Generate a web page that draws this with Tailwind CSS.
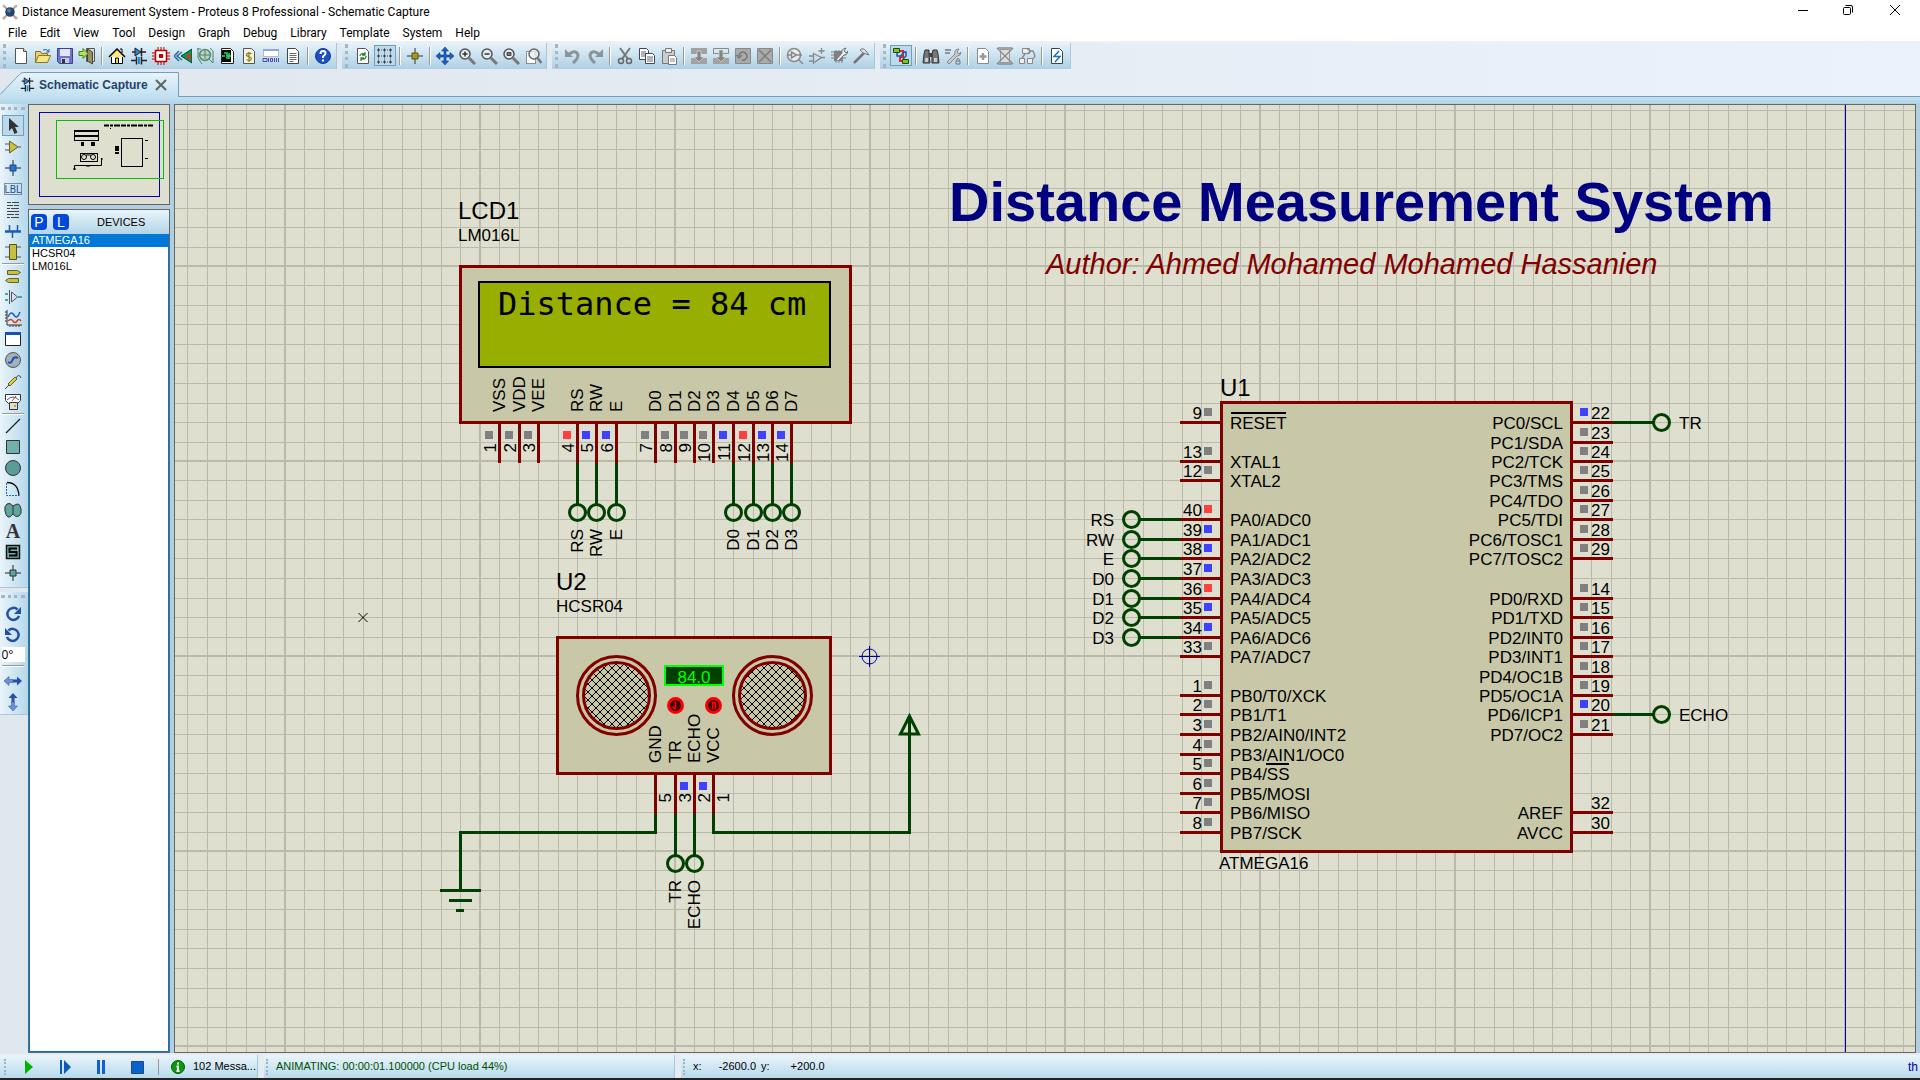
<!DOCTYPE html>
<html lang="en">
<head>
<meta charset="utf-8">
<title>Distance Measurement System - Proteus 8 Professional - Schematic Capture</title>
<script src="https://cdn.jsdelivr.net/npm/@tailwindcss/browser@4"></script>
</head>
<body class="flex h-screen flex-col overflow-hidden bg-[#e4ebf2] font-['Open_Sans',sans-serif] text-xs text-black">

<header class="shrink-0 bg-white">
  <div class="flex h-[25px] items-start justify-between">
    <div class="flex h-6 items-center gap-1 pl-0.5">
      <svg class="size-4" viewBox="0 0 16 16"><path d="M2 2l12 12M14 2L2 14" stroke="#b9a58c" stroke-width="2"/><circle cx="2" cy="2" r="1.600" fill="#bbb"/><circle cx="14" cy="2" r="1.600" fill="#bbb"/><circle cx="2" cy="14" r="1.600" fill="#caa98a"/><circle cx="14" cy="14" r="1.600" fill="#caa98a"/><circle cx="8" cy="8" r="4.800" fill="#2c4468"/><circle cx="7" cy="6.500" r="2" fill="#4d7bb5"/></svg>
      <h1 class="whitespace-nowrap font-['Roboto',sans-serif] text-xs">Distance Measurement System - Proteus 8 Professional - Schematic Capture</h1>
    </div>
    <div class="flex h-5">
      <button aria-label="Minimize" class="flex w-[45px] items-center justify-center"><svg class="size-3" viewBox="0 0 12 12"><path d="M1 6.500h10" stroke="#000"/></svg></button>
      <button aria-label="Restore" class="flex w-[45px] items-center justify-center"><svg class="size-3" viewBox="0 0 12 12" fill="none" stroke="#000"><rect x="1.500" y="3.500" width="7" height="7" rx="1"/><path d="M3.500 1.500h5.500a1.500 1.500 0 0 1 1.500 1.500v5.500"/></svg></button>
      <button aria-label="Close" class="flex w-[50px] items-center justify-center"><svg class="size-3" viewBox="0 0 12 12"><path d="M1 1l10 10M11 1L1 11" stroke="#000"/></svg></button>
    </div>
  </div>
  <nav id="menu" class="flex h-4 items-center gap-[13px] pl-2 font-['Roboto',sans-serif] text-xs"></nav>
</header>

<div id="toolbars" class="flex h-7 shrink-0 items-end gap-[5px] border-t-2 border-[#f0f0f0] bg-linear-to-r from-[#e0e7ee] to-[#eaf2fb]"></div>

<div class="flex h-7 shrink-0 items-end border-b border-[#6f9fbd] bg-linear-to-r from-[#e0e7ee] to-[#eaf2fb]">
  <div class="relative -mb-px flex h-[25px] w-[179px] items-center pl-5">
    <svg class="absolute inset-0 size-full" viewBox="0 0 179 25"><defs><linearGradient id="tabg" x1="0" y1="0" x2="0" y2="1"><stop offset="0" stop-color="#e8f4fb"/><stop offset="1" stop-color="#c2e0f0"/></linearGradient></defs><path d="M0 22.500L19.500 2.500Q21 .5 24 .5H178.500V25H0z" fill="url(#tabg)"/><path d="M0 22.500L19.500 2.500Q21 .5 24 .5H178.500V25" fill="none" stroke="#6f9fbd"/></svg>
    <button class="relative flex items-center gap-1 whitespace-nowrap font-['Liberation_Sans',sans-serif] text-xs font-bold text-[#1f4568]"><svg class="size-[15px]" viewBox="0 0 18 18"><use href="#i-schem"/></svg>Schematic Capture</button>
    <button aria-label="Close tab" class="relative ml-[7px]"><svg class="size-[12px]" viewBox="0 0 12 12"><path d="M1 1l10 10M11 1L1 11" stroke="#5f6468" stroke-width="2"/></svg></button>
  </div>
</div>
<div class="h-[7px] shrink-0 bg-linear-to-b from-[#c3e0f0] to-[#b0d4e8]"></div>

<main class="flex min-h-0 flex-1 bg-[#b0cfe0]">
  <div class="flex w-7 shrink-0 flex-col bg-[#e0e8ef]">
    <div id="modes" class="flex flex-col items-center border-b border-[#a9c6da] bg-linear-to-r from-[#e9f4fa] to-[#b5d8ec] pr-0.5 pb-1"></div>
    <div id="rotate" class="mt-1 flex flex-col items-center border-b border-[#a9c6da] bg-linear-to-r from-[#e9f4fa] to-[#b5d8ec] pr-0.5 pb-0.5"></div>
  </div>

  <aside class="mr-1 flex w-[142px] shrink-0 flex-col gap-1">
    <div class="h-[101px] shrink-0 border border-[#666] bg-[#dfdfcf]">
      <svg class="size-full" viewBox="29 105 140 99" fill="none" stroke="#000">
        <rect x="39.500" y="112.500" width="120" height="84" stroke="#0000c0"/>
        <rect x="56.500" y="120.500" width="107" height="58" stroke="#00c000"/>
        <path d="M104 125.500h49" stroke-width="2" stroke-dasharray="5 1 3 1 6 1"/><path d="M110 128.500h1"/>
        <rect x="74.500" y="130.500" width="24" height="10"/><path d="M74 131h25M74 136h25" stroke-width="2"/>
        <path d="M81 144h3M91 144h4M117 146v5M117 152v2" stroke-width="4"/>
        <rect x="80.500" y="153.500" width="17" height="8"/><circle cx="84" cy="157" r="2.500"/><circle cx="93" cy="157" r="2.500"/><path d="M86 155h5"/>
        <path d="M74.500 170v-4.500h27V158M86 166h4M73 169h3M101 159h2"/>
        <rect x="121.500" y="138.500" width="21" height="28"/><path d="M145 140.500h3M145 158.500h3"/>
      </svg>
    </div>
    <section class="flex min-h-0 flex-1 flex-col border border-[#666] font-['Liberation_Sans',sans-serif] text-[11px]">
      <div class="flex h-6 shrink-0 items-center gap-1.5 bg-linear-to-b from-[#eaf5fb] to-[#b2d4e7] pl-0.5">
        <button class="size-4 rounded-sm bg-[#0048d8] text-sm leading-4 text-white">P</button>
        <button class="size-4 rounded-sm bg-[#0048d8] text-sm leading-4 text-white">L</button>
        <h2 class="ml-[22px]">DEVICES</h2>
      </div>
      <ul class="flex-1 border border-t-0 border-[#0078d7] bg-white leading-[13px]">
        <li class="flex bg-[#0078d7] text-white"><button class="flex-1 pl-0.5 text-left">ATMEGA16</button></li>
        <li class="flex"><button class="flex-1 pl-0.5 text-left">HCSR04</button></li>
        <li class="flex"><button class="flex-1 pl-0.5 text-left">LM016L</button></li>
      </ul>
    </section>
  </aside>

  <div class="mr-1 min-w-0 flex-1 overflow-hidden border border-[#666] bg-[#dfdfcf]">
    <svg id="sheet" class="block size-full font-['Liberation_Sans',sans-serif]" role="img" aria-label="Schematic">
      <defs>
        <pattern id="grid" x="1454" y="460" width="195" height="195" patternUnits="userSpaceOnUse"><path id="gridlines" fill="#babaab"/></pattern>
        <pattern id="hatch" width="8" height="8" patternUnits="userSpaceOnUse"><path d="M-1 -1l10 10M9 -1L-1 9" stroke="#000"/></pattern>
      </defs>
      <g id="world" transform="translate(-175 -105)"></g>
    </svg>
  </div>
</main>

<footer class="mt-[2px] flex h-[23px] shrink-0 gap-1.5 font-['Liberation_Sans',sans-serif] text-[11px]">
  <div class="flex w-[258px] shrink-0 items-center border-r border-[#a9c6da] bg-linear-to-b from-[#eaf4fa] to-[#b7daec] pl-1">
    <span class="h-4 border-l-2 border-dotted border-[#9fb3c2]"></span>
    <button aria-label="Run" class="ml-[17px]"><svg class="size-4" viewBox="0 0 16 16"><path d="M2 1l8 7-8 7z" fill="#00b400"/></svg></button>
    <button aria-label="Step" class="ml-[20px]"><svg class="size-4" viewBox="0 0 16 16"><path d="M1 1h2v14H1zM5 1l7 7-7 7z" fill="#0a5bb5"/></svg></button>
    <button aria-label="Pause" class="ml-[20px]"><svg class="size-4" viewBox="0 0 16 16"><path d="M2 1h3v14H2zM7 1h3v14H7z" fill="#1060d0"/></svg></button>
    <button aria-label="Stop" class="ml-[19px]"><svg class="size-4" viewBox="0 0 16 16"><path d="M1.500 2.500h12v12h-12z" fill="#0862cc" stroke="#1a4a88"/></svg></button>
    <span class="mx-3 h-4 border-l border-[#999]"></span>
    <button class="flex items-center gap-2 whitespace-nowrap"><svg class="size-[14px]" viewBox="0 0 14 14"><circle cx="7" cy="7" r="6.500" fill="#0a9a0a" stroke="#055a05"/><path d="M7 2.500v2M5.500 6.500H7V11M5.500 11h3" stroke="#fff" stroke-width="2" fill="none"/></svg>102 Messa...</button>
  </div>
  <div class="flex w-[411px] shrink-0 items-center border-r border-[#a9c6da] bg-linear-to-b from-[#eaf4fa] to-[#b7daec] pl-0.5">
    <span class="h-4 border-l-2 border-dotted border-[#9fb3c2]"></span>
    <p class="ml-2 whitespace-nowrap text-[#005000]">ANIMATING: 00:00:01.100000 (CPU load 44%)</p>
  </div>
  <div class="flex min-w-0 flex-1 items-center justify-between bg-linear-to-b from-[#eaf4fa] to-[#b7daec] pl-0.5">
    <div class="flex items-center"><span class="h-4 border-l-2 border-dotted border-[#9fb3c2]"></span>
      <span class="w-[26px] pl-2">x:</span><span class="w-[45px] text-right">-2600.0</span><span class="pl-[5px]">y:</span><span class="w-[55px] text-right">+200.0</span></div>
    <span class="pr-0.5 text-xs text-[#0000a0]">th</span>
  </div>
</footer>
<div class="h-[2px] shrink-0 bg-[#222]"></div>

<svg class="hidden"><defs id="symbols"></defs></svg>

<script>
const icons = {
 new:'<path d="M3.500 1.500h8l3 3v12h-11z" fill="#fff" stroke="#555"/><path d="M11.500 1.500v3h3" fill="#ddd" stroke="#555"/>',
 open:'<path d="M1.500 15.500V4.500h5l1 2h6v3" fill="#e8d070" stroke="#8a7420"/><path d="M1.500 15.500l3-7h12l-3 7z" fill="#f6e488" stroke="#8a7420"/><path d="M9 3q4-2 6 2m0-3v3h-3" fill="none" stroke="#2a5caa"/>',
 save:'<path d="M1.500 1.500h15v15h-13l-2-2z" fill="#6e74c8" stroke="#3c3f8c"/><path d="M4 2h10v7H4z" fill="#e4e6f6"/><path d="M5 11h8v5H5z" fill="#c8cad8"/><path d="M6 12h3v4H6z" fill="#333"/>',
 exit:'<path d="M8.500 1.500h8v13h-8z" fill="#dcdccc" stroke="#555"/><path d="M9.500 2l5 3v12l-5-3z" fill="#9c9060" stroke="#444"/><path d="M1 4.500h4V1.500l5 5-5 5V8.500H1z" fill="#b4e060" stroke="#4d7a14"/>',
 home:'<path d="M3.500 9v7.500h11V9" fill="#fff" stroke="#000"/><path d="M1 10l8-8 8 8" fill="#ffe97a" stroke="#000" stroke-width="1.500"/><path d="M12 2h2v4" fill="none" stroke="#000"/><path d="M7.500 11h3v5.500h-3z" fill="#f2d040" stroke="#000"/>',
 schem:'<path d="M2 5h14M11.500 1v8" stroke="#222" stroke-width="1.500"/><path d="M5 1l6 4-6 4z" fill="#2a84d8" stroke="#222"/><path d="M1 13.500h5M12 13.500h5M6.500 9.500v8M11.500 9.500v8" stroke="#222" stroke-width="1.500"/><path d="M8 10h2v7H8z" fill="#2a84d8"/>',
 pcb:'<path d="M6 0v18M9 0v18M12 0v18M0 6h18M0 9h18M0 12h18" stroke="#c00000"/><rect x="3.500" y="3.500" width="11" height="11" fill="#fff" stroke="#c00000" stroke-width="1.500"/><path d="M7 7h4v4H7z" fill="#c00000"/>',
 view3d:'<path d="M7 9l11-7v14z" fill="#009a50" stroke="#0a3f2a"/><path d="M13 7h4v5h-4z" fill="#c04020"/><path d="M5 4L0 9l5 5M8 5L3 9l5 4" fill="none" stroke="#2a6a9a" stroke-width="1.500"/>',
 gerber:'<circle cx="9" cy="8" r="5.500" fill="#b5d6c0" stroke="#5a8a70" stroke-width="1.500"/><path d="M1 2h4M14 1l3 3v12M2 1v10M4 8h10M9 3v9M13 12l4 4M2 11l4 6" stroke="#55806a" fill="none"/>',
 vsm:'<path d="M3.500 1.500h9l3 3v12h-12z" fill="#fff" stroke="#222"/><path d="M4 3h9v12H4z" fill="#000"/><path d="M6 6h3v6M9 9h4M4 9h3M11 6v6" stroke="#20e060" stroke-width="1.500" fill="none"/>',
 bom:'<path d="M3.500 1.500h8l3 3v12h-11z" fill="#f6f4e0" stroke="#555"/><path d="M11.500 7Q9 5 7 7t2 2.500q3 1 2 3T6.500 12.500M9 5v10" fill="none" stroke="#8a8a20" stroke-width="1.300"/>',
 code:'<path d="M1.500 2.500h15v7h-15z" fill="#fff" stroke="#bbb"/><path d="M1 2h16v2H1z" fill="#8aa8e0"/><path d="M1 11.500h4v3H1zM6.500 11v4M8.500 11.500h2v3h-2zM12.500 11v4M14.500 11v4M16.500 11v4" fill="none" stroke="#4a4ab0"/>',
 notes:'<path d="M3.500 1.500h8l3 3v12h-11z" fill="#fff" stroke="#444"/><path d="M5.500 6.500h7M5.500 8.500h7M5.500 10.500h7M5.500 12.500h7M5.500 14.500h4" stroke="#666"/>',
 help:'<circle cx="9" cy="9" r="7.500" fill="#1d50c0" stroke="#123a90"/><path d="M6.500 7q0-3 2.500-3t2.500 2.200Q11.500 8 9 9.500V11M9 12.500v2" fill="none" stroke="#fff" stroke-width="2"/>',
 refresh:'<path d="M3.500 1.500h8l3 3v12h-11z" fill="#fff" stroke="#555"/><path d="M6 9q0-3 5-2M11 5v3H8M12 9q0 4-5 3M7 14v-3h3" fill="none" stroke="#2a8a2a" stroke-width="1.300"/>',
 grid:'<path d="M1 3h3M7 3h3M13 3h3M1 9h3M7 9h3M13 9h3M1 15h3M7 15h3M13 15h3M2.500 1.500v3M8.500 1.500v3M14.500 1.500v3M2.500 7.500v3M8.500 7.500v3M14.500 7.500v3M2.500 13.500v3M8.500 13.500v3M14.500 13.500v3" stroke="#333"/><path d="M5 3h1M11 3h1M5 9h1M11 9h1M5 15h1M11 15h1M2 6h1M8 6h1M14 6h1M2 12h1M8 12h1M14 12h1" stroke="#555"/>',
 origin:'<path d="M9 1v16M1 9h16" stroke="#333"/><path d="M6 6h6v6H6z" fill="#a89a20" stroke="#5a5210"/>',
 pan:'<path d="M9 0l3.500 4H10v4h4V5.500L18 9l-4 3.500V10h-4v4h2.500L9 18l-3.500-4H8v-4H4v2.500L0 9l4-3.500V8h4V4H5.500z" fill="#1c5fc0" stroke="#0e3c80" stroke-width=".6"/>',
 zin:'<circle cx="7" cy="7" r="5" fill="#e4edf2" stroke="#555" stroke-width="1.500"/><path d="M11 11l6 6" stroke="#777" stroke-width="3"/><path d="M4.500 7h5M7 4.500v5" stroke="#333" stroke-width="1.500"/>',
 zout:'<circle cx="7" cy="7" r="5" fill="#e4edf2" stroke="#555" stroke-width="1.500"/><path d="M11 11l6 6" stroke="#777" stroke-width="3"/><path d="M4.500 7h5" stroke="#333" stroke-width="1.500"/>',
 zall:'<circle cx="7" cy="7" r="5" fill="#e4edf2" stroke="#555" stroke-width="1.500"/><path d="M11 11l6 6" stroke="#777" stroke-width="3"/><path d="M5 5.500h4v3H5z" fill="#777" stroke="#444"/>',
 zarea:'<path d="M2.500 4.500h9v12h-9z" fill="#fff" stroke="#333" stroke-dasharray="1 1"/><circle cx="10" cy="7" r="5" fill="#e4edf2" fill-opacity=".8" stroke="#666" stroke-width="1.500"/><path d="M13.500 11l4 5" stroke="#777" stroke-width="2.500"/>',
 undo:'<path d="M5 7q7-5 9 1 0 4-5 8" fill="none" stroke="#8c949a" stroke-width="3"/><path d="M1 2v8h8z" fill="#8c949a"/>',
 redo:'<path d="M13 7Q6 2 4 8q0 4 5 8" fill="none" stroke="#8c949a" stroke-width="3"/><path d="M17 2v8H9z" fill="#8c949a"/>',
 cut:'<path d="M4 1l8 11M14 1L6 12" stroke="#777" stroke-width="2"/><circle cx="5" cy="14" r="2.500" fill="none" stroke="#666" stroke-width="1.500"/><circle cx="13" cy="14" r="2.500" fill="none" stroke="#666" stroke-width="1.500"/>',
 copy:'<path d="M1.500 1.500h7l2 2v9h-9z" fill="#fff" stroke="#445"/><path d="M3 5h5M3 7h5M3 9h5" stroke="#667"/><path d="M7.500 6.500h7l2 2v8h-9z" fill="#fff" stroke="#445"/><path d="M9 10h6M9 12h6M9 14h6" stroke="#667"/>',
 paste:'<path d="M2.500 3.500h12v13h-12z" fill="#ccc" stroke="#777"/><path d="M5.500 1.500h6v4h-6z" fill="#eee" stroke="#777"/><path d="M8.500 8.500h6l2 2v7h-8z" fill="#fff" stroke="#777"/><path d="M10 12h5M10 14h5" stroke="#888"/>',
 bcopy:'<path d="M1 1h16v6H1zM1 11h16v6H1z" fill="#a2a2a2"/><path d="M7 4h4v6h3l-5 5-5-5h3z" fill="#858585" stroke="#ddd" stroke-width=".7"/>',
 bmove:'<path d="M1.500 1.500h15v5h-15z" fill="none" stroke="#8a8a8a"/><path d="M1 11h16v6H1z" fill="#a2a2a2"/><path d="M7 3h4v7h3l-5 5-5-5h3z" fill="#858585" stroke="#ddd" stroke-width=".7"/>',
 brot:'<path d="M1.500 1.500h15v15h-15z" fill="#aaa" stroke="#888"/><path d="M5 9a4 4 0 1 1 3 4M2.500 8L5 11l3-3" fill="none" stroke="#777" stroke-width="1.500"/>',
 bdel:'<path d="M1.500 1.500h15v15h-15z" fill="#aaa" stroke="#888"/><path d="M3 3l12 12M15 3L3 15" stroke="#7c7c7c" stroke-width="1.500"/>',
 pick:'<circle cx="8" cy="8" r="6.500" fill="#e8eef0" stroke="#8a8a8a" stroke-width="1.500"/><path d="M5.500 5l5 3-5 3zM1 8h4M11 8h5M13 13l4 4" fill="none" stroke="#888" stroke-width="1.500"/>',
 make:'<path d="M5.500 6.500l8 4-8 5.500zM1 9h4M1 14h4M13 10.500h4M13.500 1v6M10.500 4h6" fill="none" stroke="#888" stroke-width="1.300"/>',
 pack:'<path d="M4 4h9v10H4z" fill="#808080"/><path d="M1 5h15M1 8h15M1 11h15M6 3v13M9 3v13M12 3v13" stroke="#808080"/><path d="M6 13l6-7q-1-4 4-5l-2 3 2 2 2-2q0 4-4 4l-6 6z" fill="#eee" stroke="#777"/>',
 decomp:'<path d="M2 16L12 6" stroke="#777" stroke-width="2.500"/><path d="M8 3q3-3 6 1l3 4-3-1-3-1z" fill="#ddd" stroke="#777"/>',
 wire:'<path d="M7 4h4v6H8v4h3" fill="none" stroke="#d83010" stroke-width="2"/><path d="M7 4H5v5h4l3-4v-1M12 5h2v4l-3 3" fill="none" stroke="#2454c0" stroke-width="1.500"/><path d="M1.500 1.500h6v4h-6zM10.500 12.500h6v4h-6z" fill="#78c820" stroke="#244a08"/>',
 find:'<path d="M3 3h4v4l1 9H1l1-9zM11 3h4l1 4 1 9h-7V7z" fill="#777" stroke="#333"/><path d="M7 6h4v4H7z" fill="#444"/><path d="M3 11h3v4H3zM12 11h3v4h-3z" fill="#ccc"/>',
 prop:'<path d="M1 3h6M1 6h5" stroke="#777" stroke-width="1.500"/><path d="M3 15l8-8q-1-5 4-5l-2 3 2 2 2-2q0 4-4 4l-8 8z" fill="#ccc" stroke="#888"/><path d="M12 17v-3l2-3 2 3v3zM12 14h4" fill="none" stroke="#777"/>',
 addsh:'<path d="M3.500 1.500h8l3 3v12h-11z" fill="#fff" stroke="#888"/><path d="M9 6v7M5.500 9.500h7" stroke="#999" stroke-width="2.500"/>',
 remsh:'<path d="M4.500 2.500h9v13h-9z" fill="#ddd" stroke="#999"/><path d="M1 1l16 16M17 1L1 17M2 1h14M2 17h14" stroke="#8c8c8c" stroke-width="1.300"/>',
 hier:'<path d="M4.500 1.500h7v5h-7zM1.500 11.500h5v5h-5zM9.500 11.500h5v5h-5z" fill="#eee" stroke="#888"/><path d="M12 4h3l2 5-2 3M4 11l3-4M9 2l4 2-4 3" fill="none" stroke="#888" stroke-width="1.300"/>',
 erc:'<path d="M3.500 1.500h8l3 3v12h-11z" fill="#fff" stroke="#345"/><path d="M11 4L6 9.500h6L7 15" fill="none" stroke="#1c70c8" stroke-width="1.500"/>',
 select:'<path d="M5 1v13l3-3 2.500 6 3-1.500L11 10h4z" fill="#333"/>',
 comp:'<path d="M1 6h4M1 12h4M14 9h3" stroke="#555"/><path d="M5.500 3l8.500 6-8.500 6z" fill="#c8c040" stroke="#666030"/>',
 junc:'<path d="M9 1v16M1 9h16" stroke="#222"/><path d="M6 6h6v6H6z" fill="#2a74c8" stroke="#164a88"/>',
 lbl:'<rect x=".5" y="3.500" width="17" height="11" fill="none" stroke="#333" stroke-dasharray="1 1"/><text x="9" y="13" font-size="10" text-anchor="middle" fill="#1450a0" font-family="Roboto,sans-serif">LBL</text>',
 script:'<path d="M3 1.500h4M8 1.500h7M3 4.500h6M10 4.500h5M3 7.500h3M7 7.500h8M3 10.500h12M3 13.500h7M11 13.500h4M3 16.500h3M7 16.500h8" stroke="#444"/>',
 bus:'<path d="M1 9.500h16" stroke="#1a5cb0" stroke-width="2.500"/><path d="M5.500 3v6M13.500 3v6M8.500 10v6" stroke="#1a5cb0" stroke-width="1.500"/>',
 sub:'<path d="M1 4h16M1 14h16" stroke="#555"/><path d="M5.500 1.500h7v15h-7z" fill="#c8c040" stroke="#555020"/>',
 term:'<path d="M3.500 3.500h10l3 2-3 2h-10zM14.500 11.500h-10l-3 2 3 2h10z" fill="#c8c040" stroke="#666030"/>',
 pin:'<path d="M1 6h3M1 12h3M14 9h4" stroke="#1a9090" stroke-width="1.500"/><path d="M5.500 2v14M7.500 4l6 5-6 5z" fill="none" stroke="#555"/>',
 graph:'<path d="M3 1v15h15M1 3h2M1 6h2M1 9h2M1 12h2M6 16v2M9 16v2M12 16v2M15 16v2" stroke="#333" fill="none"/><path d="M4 8q3-7 6-2t6-3" fill="none" stroke="#1a60c0" stroke-width="1.500"/><path d="M4 12q3-3 5 0t4 0 4 0" fill="none" stroke="#d04010" stroke-width="1.500"/>',
 popup:'<path d="M1.500 2.500h15v13h-15z" fill="#fff" stroke="#222"/><path d="M1 2h16v3H1z" fill="#1c50b0"/>',
 gen:'<circle cx="9" cy="9" r="7.500" fill="#a5b0bc" stroke="#555"/><path d="M4 11q3 2 4.500-2T14 7" fill="none" stroke="#1a50b0" stroke-width="2"/>',
 probe:'<path d="M1 17l4-4M12 6q3-5 5 0" stroke="#444" fill="none"/><path d="M4 12l7-7 2 2-7 7z" fill="#d8d040" stroke="#666020"/>',
 meter:'<path d="M1.500 1.500h15v6l-3 3h-9l-3-3z" fill="#fff" stroke="#333"/><path d="M3 7q6-6 12 0" stroke="#2a60b0" fill="none"/><path d="M8 8l4-5" stroke="#d03010"/><path d="M5.500 9.500h8v7h-8z" fill="#ddd" stroke="#333"/><path d="M10 12h2v2h-2z" fill="#d0a000"/>',
 line:'<path d="M2 16L16 2" stroke="#222" stroke-width="1.300"/>',
 box:'<path d="M2.500 2.500h13v13h-13z" fill="#72b0ac" stroke="#333"/>',
 circ:'<circle cx="9" cy="9" r="7.500" fill="#5a9c98" stroke="#333"/>',
 arc:'<path d="M2.500 3v12.500H15" fill="none" stroke="#1a60c0" stroke-dasharray="2 1"/><path d="M3 2.500q11 0 12 13" fill="none" stroke="#111" stroke-width="1.300"/>',
 blob:'<path d="M9 5q-3-4-6-2t-2 7 3 6 5-3q3 4 6 2t2-7-3-5-5 2z" fill="#5fa5a0" stroke="#333"/><path d="M9 5v8" stroke="#333"/>',
 text:'<text x="9" y="16" font-size="20" font-weight="bold" text-anchor="middle" fill="#333" font-family="Liberation Serif,serif">A</text>',
 sym:'<path d="M2.500 2.500h13v13h-13z" fill="#72b0ac" stroke="#111" stroke-width="1.500"/><path d="M13 5.500H5.500v3.500h7v3.500H5" fill="none" stroke="#000" stroke-width="2"/>',
 mark:'<path d="M9 1v16M1 9h16" stroke="#222"/><path d="M6 6h6v6H6z" fill="#5fa5a0" stroke="#333"/>',
 cw:'<path d="M13.500 4.500A6 6 0 1 0 15 11" fill="none" stroke="#2450a0" stroke-width="2.500"/><path d="M17 2v7h-7z" fill="#2450a0"/>',
 ccw:'<path d="M4.500 4.500A6 6 0 1 1 3 11" fill="none" stroke="#2450a0" stroke-width="2.500"/><path d="M1 2v7h7z" fill="#2450a0"/>',
 fliph:'<path d="M0 9l5-4.500V7.500h4v3H5v3z" fill="#6a90d8" stroke="#3c5ca0" stroke-width=".6"/><path d="M18 9l-5-4.500V7.500H9v3h4v3z" fill="#2450a8"/>',
 flipv:'<path d="M9 0l4.500 5H10.500v4h-3V5h-3z" fill="#2450a8"/><path d="M9 18l4.500-5H10.500V9h-3v4h-3z" fill="#6a90d8" stroke="#3c5ca0" stroke-width=".6"/>'
};
document.getElementById('symbols').innerHTML = Object.entries(icons).map(([k, v]) => `<symbol id="i-${k}" viewBox="0 0 18 18">${v}</symbol>`).join('');

document.getElementById('menu').innerHTML = 'File Edit View Tool Design Graph Debug Library Template System Help'.split(' ')
  .map(m => `<a href="#" class="leading-4">${m}</a>`).join('');

const active = ['grid', 'wire', 'select'];
const button = n => `<button aria-label="${n}" class="flex h-[21px] w-[22px] shrink-0 items-center justify-center ${active.includes(n) ? 'bg-[#bddaec] outline -outline-offset-1 outline-[#6f9fbd]' : ''}"><svg class="size-[18px]" viewBox="0 0 18 18"><use href="#i-${n}"/></svg></button>`;

const groups = [
  'new open save exit | home schem pcb view3d gerber vsm bom code notes | help',
  'refresh grid | origin | pan zin zout zall zarea',
  'undo redo | cut copy paste | bcopy bmove brot bdel | pick make pack decomp',
  'wire | find prop | addsh remsh hier | erc'];
document.getElementById('toolbars').innerHTML = groups.map(g =>
  `<div class="flex h-[26px] shrink-0 items-center border-r border-[#a9c6da] bg-linear-to-b from-[#e6f3fa] to-[#aed0e4] pr-0.5 pb-px pl-[3px]"><span class="mr-1 h-6 border-l-3 border-dotted border-[#a5b5c2]"></span>${g.split(' ').map(n => n === '|' ? '<span class="mx-[3px] h-[18px] w-0.5 border-l border-[#999] bg-white"></span>' : button(n)).join('')}</div>`).join('');

const grip = '<span class="mt-[3px] mb-[5px] w-6 border-t-3 border-dotted border-[#a5b5c2]"></span>';
const rule = '<span class="mt-px h-0.5 w-[22px] border-t border-[#999] bg-white"></span>';
const column = s => s.split(' ').map(n => n === '|' ? rule : button(n)).join('');
document.getElementById('modes').innerHTML = grip + column('select comp junc lbl script bus sub | term pin graph popup gen probe meter | line box circ arc blob text sym mark');
document.getElementById('rotate').innerHTML = grip + column('cw ccw') +
  '<input aria-label="Rotation angle" value="0°" class="my-0.5 h-[15px] w-[23px] bg-white text-xs">' + rule + '<span class="h-[3px]"></span>' + column('fliph flipv');

// Sheet grid: nine minor lines between each pair of major ones
const across = [19, 39, 58, 78, 97, 117, 136, 156, 175], down = [19, 39, 58, 78, 97, 117, 137, 156, 176];
document.getElementById('gridlines').setAttribute('d', 'M0 0h195v2H0zM0 0h2v195H0z' +
  across.map(x => `M${x + 1} 0h1v195h-1z`).join('') + down.map(y => `M0 ${y + 1}h195v1H0z`).join(''));

const RED = '#800000', WIRE = '#004000', BODY = '#c8c8a9';
const level = { g: '#808080', r: '#ff4040', b: '#4040ff' };
let out = '<rect x="175" y="105" width="4000" height="4000" fill="url(#grid)"/><path d="M1845.500 105v4000" stroke="#0000a0"/>';
const line = (d, c) => out += `<path d="${d}" fill="none" stroke="${c}" stroke-width="3"/>`;
const text = (x, y, s, size = 17, more = '') => out += `<text x="${x}" y="${y}" font-size="${size}" ${more}>${s}</text>`;
const up = (x, y, s, end) => out += `<text transform="translate(${x} ${y}) rotate(-90)" font-size="17" ${end ? 'text-anchor="end"' : ''}>${s}</text>`;
const box = (x, y, w, h) => out += `<rect x="${x}" y="${y}" width="${w}" height="${h}" fill="${BODY}" stroke="${RED}" stroke-width="3"/>`;
const node = (x, y) => out += `<circle cx="${x}" cy="${y}" r="8" fill="none" stroke="${WIRE}" stroke-width="3"/>`;
const lamp = (x, y, c) => { if (c) out += `<rect x="${x}" y="${y}" width="8" height="8" fill="${level[c]}"/>`; };
const END = 'text-anchor="end"';

text(949, 221, 'Distance Measurement System', 56, 'font-weight="bold" fill="#000080"');
text(1046, 274, 'Author: Ahmed Mohamed Mohamed Hassanien', 29, 'font-style="italic" fill="#800000"');

// LCD1
text(458, 219, 'LCD1', 24); text(458, 241, 'LM016L');
box(460.5, 266.5, 390, 156);
out += '<rect x="479" y="282" width="351" height="85" fill="#98ae00" stroke="#000" stroke-width="2"/>';
text(498, 315, 'Distance = 84 cm', 32, 'font-family="DejaVu Sans Mono,monospace" xml:space="preserve"');
[[499, 'VSS', 'g'], [519, 'VDD', 'g'], [538, 'VEE', 'g'], [577, 'RS', 'r', 'RS'], [596, 'RW', 'b', 'RW'], [616, 'E', 'b', 'E'],
 [655, 'D0', 'g'], [675, 'D1', 'g'], [694, 'D2', 'g'], [713, 'D3', 'g'], [733, 'D4', 'b', 'D0'], [753, 'D5', 'r', 'D1'], [772, 'D6', 'b', 'D2'], [791, 'D7', 'b', 'D3']]
.forEach(([x, name, lv, net], i) => {
  line(`M${x + .5} 424v39`, RED); up(x + 6, 412, name); up(x - 3, 443, i + 1, true); lamp(x - 14, 431, lv);
  if (net) { line(`M${x + .5} 463v41`, WIRE); node(x + .5, 512.5); up(x + 6, 529, net, true); }
});

// U2
text(556, 590, 'U2', 24); text(556, 612, 'HCSR04');
box(557.5, 637.5, 273, 136);
[616.5, 772.5].forEach(x => out += `<circle cx="${x}" cy="695.500" r="39" fill="none" stroke="${RED}" stroke-width="3"/><circle cx="${x}" cy="695.500" r="33" fill="url(#hatch)" stroke="${RED}" stroke-width="3"/>`);
out += '<rect x="665" y="666" width="58" height="19" fill="#004000" stroke="#00ff00" stroke-width="2"/>';
text(694, 683, '84.0', 17, 'text-anchor="middle" fill="#00ff00"');
[[675.5, 'M0 -4v8M-3 1l3 3'], [713.5, 'M-1 4v-8M-2 -3h4v7']].forEach(([x, d]) => out += `<g transform="translate(${x} 705.500)"><circle r="7" fill="#400000" stroke="#ff0000" stroke-width="3"/><path d="${d}" fill="none" stroke="#ff0000" stroke-width="1.500"/></g>`);
[[655, 'GND', 5], [675, 'TR', 3, 'b'], [694, 'ECHO', 2, 'b'], [713, 'VCC', 1]].forEach(([x, name, n, lv]) => {
  line(`M${x + .5} 775v39`, RED); up(x + 6, 763, name); up(x + 16, 793, n, true); lamp(x + 5, 782, lv);
});
[[675, 'TR'], [694, 'ECHO']].forEach(([x, s]) => { line(`M${x + .5} 814v41`, WIRE); node(x + .5, 863.5); up(x + 6, 880, s, true); });
line('M655.500 814v18.500H460.500V890M440 890.500h41M449 900.500h23M456 910.500h8', WIRE);
line('M713.500 814v18.500H909.500V716M909.500 716l-9 18h18z', WIRE);

// U1
text(1220, 396, 'U1', 24); text(1219, 869, 'ATMEGA16');
box(1221.5, 402.5, 350, 449);
[[422, 9, 'RESET', 'g'], [461, 13, 'XTAL1', 'g'], [480, 12, 'XTAL2', 'g'],
 [519, 40, 'PA0/ADC0', 'r', 'RS'], [539, 39, 'PA1/ADC1', 'b', 'RW'], [558, 38, 'PA2/ADC2', 'b', 'E'], [578, 37, 'PA3/ADC3', 'b', 'D0'],
 [598, 36, 'PA4/ADC4', 'r', 'D1'], [617, 35, 'PA5/ADC5', 'b', 'D2'], [637, 34, 'PA6/ADC6', 'b', 'D3'], [656, 33, 'PA7/ADC7', 'g'],
 [695, 1, 'PB0/T0/XCK', 'g'], [714, 2, 'PB1/T1', 'g'], [734, 3, 'PB2/AIN0/INT2', 'g'], [754, 4, 'PB3/AIN1/OC0', 'g'],
 [773, 5, 'PB4/SS', 'g'], [793, 6, 'PB5/MOSI', 'g'], [812, 7, 'PB6/MISO', 'g'], [832, 8, 'PB7/SCK', 'g']]
.forEach(([y, n, name, lv, net]) => {
  line(`M1180 ${y + .5}h40`, RED); text(1230, y + 7, name); text(1202, y - 3, n, 17, END); lamp(1204, y - 14, lv);
  if (net) { line(`M1140 ${y + .5}h40`, WIRE); node(1131.5, y + .5); text(1114, y + 7, net, 17, END); }
});
out += '<path d="M1231 413h55M1266 764h23" stroke="#000" stroke-width="2"/>';
[[422, 22, 'PC0/SCL', 'b', 'TR'], [442, 23, 'PC1/SDA', 'g'], [461, 24, 'PC2/TCK', 'g'], [480, 25, 'PC3/TMS', 'g'], [500, 26, 'PC4/TDO', 'g'],
 [519, 27, 'PC5/TDI', 'g'], [539, 28, 'PC6/TOSC1', 'g'], [558, 29, 'PC7/TOSC2', 'g'], [598, 14, 'PD0/RXD', 'g'], [617, 15, 'PD1/TXD', 'g'],
 [637, 16, 'PD2/INT0', 'g'], [656, 17, 'PD3/INT1', 'g'], [676, 18, 'PD4/OC1B', 'g'], [695, 19, 'PD5/OC1A', 'g'], [714, 20, 'PD6/ICP1', 'b', 'ECHO'],
 [734, 21, 'PD7/OC2', 'g'], [812, 32, 'AREF'], [832, 30, 'AVCC']]
.forEach(([y, n, name, lv, net]) => {
  line(`M1573 ${y + .5}h40`, RED); text(1563, y + 7, name, 17, END); text(1610, y - 3, n, 17, END); lamp(1580, y - 14, lv);
  if (net) { line(`M1613 ${y + .5}h40`, WIRE); node(1661.5, y + .5); text(1679, y + 7, net); }
});

// Cursor and sheet origin marks
out += '<path d="M859 656.500h21M869.500 646v21" stroke="#0000a0"/><circle cx="869.500" cy="656.500" r="7.500" fill="none" stroke="#0000a0"/><path d="M358.500 613l9 9M367.500 613l-9 9" stroke="#000"/>';
document.getElementById('world').innerHTML = out;
</script>
</body>
</html>
